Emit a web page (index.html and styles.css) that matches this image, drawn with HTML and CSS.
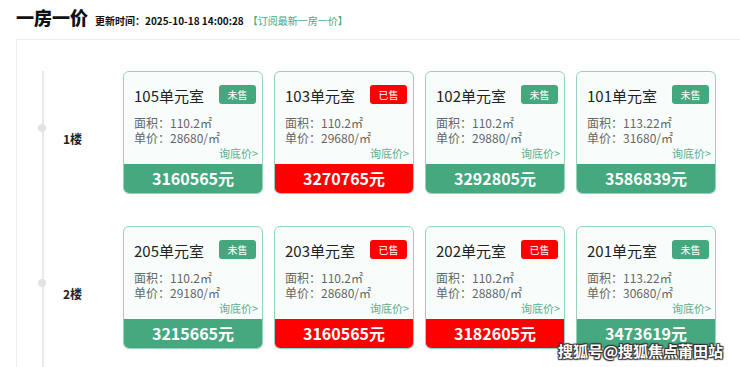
FILE: index.html
```html
<!DOCTYPE html>
<html lang="zh-CN">
<head>
<meta charset="utf-8">
<title>一房一价</title>
<link rel="stylesheet" href="styles.css">
</head>
<body>
<div class="page">
  <div class="head">
    <h1 class="title">一房一价</h1>
    <span class="update">更新时间：2025-10-18 14:00:28</span>
    <a class="subscribe">【订阅最新一房一价】</a>
  </div>
  <div class="box">
    <div class="timeline">
      <div class="floor">
        <div class="floor-label"><span class="dot"></span>1楼</div>
        <div class="cards">
          <div class="card">
            <div class="card-top"><span class="room">105单元室</span><span class="badge">未售</span></div>
            <div class="info">面积：110.2㎡</div>
            <div class="info">单价：28680/㎡</div>
            <div class="ask">询底价&gt;</div>
            <div class="total">3160565元</div>
          </div>
          <div class="card sold">
            <div class="card-top"><span class="room">103单元室</span><span class="badge">已售</span></div>
            <div class="info">面积：110.2㎡</div>
            <div class="info">单价：29680/㎡</div>
            <div class="ask">询底价&gt;</div>
            <div class="total">3270765元</div>
          </div>
          <div class="card">
            <div class="card-top"><span class="room">102单元室</span><span class="badge">未售</span></div>
            <div class="info">面积：110.2㎡</div>
            <div class="info">单价：29880/㎡</div>
            <div class="ask">询底价&gt;</div>
            <div class="total">3292805元</div>
          </div>
          <div class="card">
            <div class="card-top"><span class="room">101单元室</span><span class="badge">未售</span></div>
            <div class="info">面积：113.22㎡</div>
            <div class="info">单价：31680/㎡</div>
            <div class="ask">询底价&gt;</div>
            <div class="total">3586839元</div>
          </div>
        </div>
      </div>
      <div class="floor">
        <div class="floor-label"><span class="dot"></span>2楼</div>
        <div class="cards">
          <div class="card">
            <div class="card-top"><span class="room">205单元室</span><span class="badge">未售</span></div>
            <div class="info">面积：110.2㎡</div>
            <div class="info">单价：29180/㎡</div>
            <div class="ask">询底价&gt;</div>
            <div class="total">3215665元</div>
          </div>
          <div class="card sold">
            <div class="card-top"><span class="room">203单元室</span><span class="badge">已售</span></div>
            <div class="info">面积：110.2㎡</div>
            <div class="info">单价：28680/㎡</div>
            <div class="ask">询底价&gt;</div>
            <div class="total">3160565元</div>
          </div>
          <div class="card sold">
            <div class="card-top"><span class="room">202单元室</span><span class="badge">已售</span></div>
            <div class="info">面积：110.2㎡</div>
            <div class="info">单价：28880/㎡</div>
            <div class="ask">询底价&gt;</div>
            <div class="total">3182605元</div>
          </div>
          <div class="card">
            <div class="card-top"><span class="room">201单元室</span><span class="badge">未售</span></div>
            <div class="info">面积：113.22㎡</div>
            <div class="info">单价：30680/㎡</div>
            <div class="ask">询底价&gt;</div>
            <div class="total">3473619元</div>
          </div>
        </div>
      </div>
    </div>
  </div>
  <div class="watermark">搜狐号@搜狐焦点莆田站</div>
</div>
</body>
</html>
```

FILE: styles.css
```css
* { box-sizing: border-box; }
html, body { margin: 0; padding: 0; background: #fff; }
body {
  font-family: "Noto Sans CJK SC", "Noto Sans", sans-serif;
  color: #333;
  overflow: hidden;
}
.page { position: relative; width: 740px; height: 367px; overflow: hidden; }
.head {
  height: 39px;
  padding-left: 16px;
  display: flex;
  align-items: baseline;
  padding-top: 2px;
}
.title {
  margin: 0;
  font-size: 18px;
  font-weight: 900;
  color: #111;
  line-height: 30px;
}
.update {
  margin-left: 7px;
  font-size: 10px;
  font-weight: 700;
  color: #111;
}
.subscribe {
  margin-left: 4px;
  font-size: 10px;
  color: #45a87f;
}
.box {
  margin-left: 16px;
  border-top: 1px solid #ececec;
  border-left: 1px solid #ececec;
  padding-top: 31px;
  height: 340px;
}
.timeline {
  margin-left: 25px;
  border-left: 2px solid #e9e9e9;
  display: flex;
  flex-direction: column;
  gap: 32px;
  height: 320px;
}
.floor { display: flex; }
.floor-label {
  position: relative;
  width: 79px;
  padding-left: 19px;
  padding-top: 59px;
  font-size: 12px;
  font-weight: 700;
  color: #222;
  line-height: 18px;
}
.dot {
  position: absolute;
  left: -6px;
  top: 53px;
  width: 8px;
  height: 8px;
  border-radius: 50%;
  background: #e3e3e3;
}
.cards { display: flex; gap: 11px; }
.card {
  width: 140px;
  height: 123px;
  border: 1px solid #93d3bc;
  border-radius: 6px;
  background: #f8fdfb;
  display: flex;
  flex-direction: column;
  overflow: hidden;
}
.card-top {
  display: flex;
  justify-content: space-between;
  align-items: center;
  padding: 13px 6px 0 10px;
  height: 32px;
}
.room { font-size: 15px; color: #222; line-height: 20px; padding-top: 3px; }
.badge {
  width: 37px;
  height: 19px;
  border-radius: 3px;
  background: #45a77e;
  color: #fff;
  font-size: 10px;
  line-height: 19px;
  text-align: center;
}
.sold .badge { background: #ff0000; }
.info {
  padding-left: 10px;
  font-size: 12px;
  line-height: 15px;
  color: #666;
}
.card-top + .info { margin-top: 11px; }
.ask {
  text-align: right;
  padding-right: 4px;
  font-size: 11px;
  line-height: 14px;
  color: #5aae8d;
  margin-top: 1px;
}
.total {
  margin-top: auto;
  height: 29px;
  background: #45a87f;
  color: #fff;
  font-size: 16px;
  font-weight: 700;
  text-align: center;
  line-height: 29px;
}
.sold .total { background: #ff0000; }
.watermark {
  position: absolute;
  left: 558px;
  top: 339px;
  font-size: 15px;
  font-weight: 700;
  color: #fff;
  line-height: 24px;
  text-shadow: 0 0 2px #333, 1px 1px 1px #333, -1px -1px 1px #333, 1px -1px 1px #333, -1px 1px 1px #333;
}
```
